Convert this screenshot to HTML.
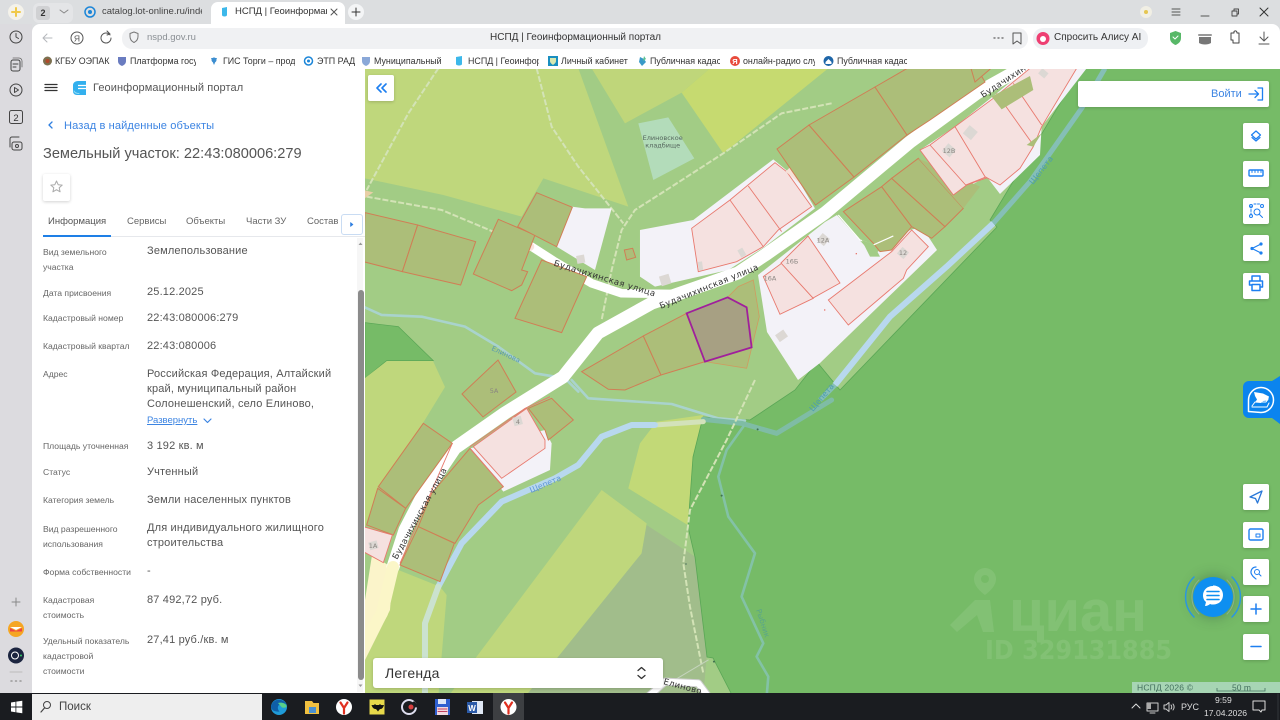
<!DOCTYPE html>
<html><head><meta charset="utf-8"><title>НСПД</title>
<style>
html,body{margin:0;padding:0;width:1280px;height:720px;overflow:hidden;background:#dcdee0;font-family:"Liberation Sans","DejaVu Sans",sans-serif}
svg{position:absolute;left:0;top:0}
polygon,polyline,path,line,circle,rect{vector-effect:non-scaling-stroke}
.t{position:absolute;white-space:nowrap;line-height:14px;height:14px}
.box{position:absolute;background:#fff;border-radius:2px;box-shadow:0 1px 3px rgba(0,0,0,.18)}
.b{font-size:8.9px;color:#333;top:54px}
.l{font-size:8.6px;color:#666;left:43px}
.v{font-size:11px;color:#555;left:147px;letter-spacing:.17px}
.tab{font-size:9.5px;color:#666;top:215px}
.o{fill:#acbe79;stroke:#d07e55;stroke-width:1}
.p{fill:#f5e1e0;stroke:#e8796e;stroke-width:.9}
.w{fill:#f3f2f8}
.g{fill:#dcd8d4}
.dash{fill:none;stroke:#d3e3b6;stroke-width:2;stroke-dasharray:6 2}
.r{fill:none;stroke-linejoin:round;stroke-linecap:round}
</style></head><body>

<!-- MAP -->
<svg width="1280" height="720" viewBox="0 0 1280 720">
<defs><clipPath id="mc"><rect x="365" y="69" width="915" height="624"/></clipPath></defs>
<g clip-path="url(#mc)">
<rect x="365" y="69" width="915" height="624" fill="#a2cc85"/>
<!-- fields top -->
<g transform="translate(365 70) scale(.3333)">
<polygon fill="#bfd77c" points="0,-5 640,-5 790,410 535,325 470,440 235,375 0,325"/>
<polygon fill="#bfd67a" points="680,-5 780,160 950,68 1035,-5"/>
<polygon fill="#c6da70" points="1035,-5 950,68 1075,250 1390,-5"/>
<polygon fill="#b3dcba" points="820,160 910,142 988,265 865,330"/>
<polygon fill="#76bb67" stroke="#5aa656" stroke-width=".7" points="0,758 100,770 205,872 65,872 0,925"/>
</g>
<polygon fill="#bfd77c" points="365,527 365,378 387,361 433,361 445,387 423,423 378,487"/>
<!-- fields bottom -->
<g transform="translate(365 380) scale(.3333)">
<polygon fill="#bfd77c" points="100,570 225,620 245,645 220,950 0,950 0,770"/>
<polygon fill="#bfd77c" points="710,330 845,430 830,520 580,830 490,950 250,950 335,830"/>
<polygon fill="#c2d977" points="875,125 1015,105 985,230 968,435 790,325 825,190"/>
<polygon fill="#a1bd8b" points="845,435 990,530 1025,830 1015,950 480,950 580,830 830,520"/>
</g>
<!-- forest -->
<polygon fill="#76bb67" stroke="#5aa656" stroke-width=".8" points="1083,65 990,220 997,227 840,390 817,362 795,390 750,420 703,417 693,457 688,527 695,557 707,657 713,658 732,695 1285,695 1285,65"/>
<!-- rivers -->
<g transform="translate(365 380) scale(.3333)" class="r">
<polyline stroke="#a9d3cd" stroke-width="2.6" points="620,0 670,55 920,72 1060,115 1140,122"/>
<polyline stroke="#7fbca5" stroke-width="5" points="1400,60 1235,160 1130,130 1015,118"/>
<polyline stroke="#d3e2bb" stroke-width="5" points="1015,125 870,135"/>
<polyline stroke="#b8d8ee" stroke-width="6" points="870,135 800,135 710,170 640,255 570,295 410,365 290,490 220,620"/>
<polyline stroke="#cbe2cf" stroke-width="6" points="220,620 180,730 180,960"/>
<polyline stroke="#83c2a6" stroke-width="2.6" points="1135,140 1085,210 1060,290 1090,410 1170,520 1130,650 1195,790 1175,830 1210,890 1205,950"/>
</g>
<g transform="translate(365 70) scale(.3333)" class="r">
<polyline stroke="#a9d3cd" stroke-width="2.6" points="-5,710 50,735 170,740 300,770 400,830 510,910 600,925 640,965"/>
</g>
<g transform="translate(820 70) scale(.3333)" class="r">
<polyline stroke="#85bfb6" stroke-width="5" stroke-linecap="butt" points="855,-5 785,115 630,335 520,460"/>
<polyline stroke="#b8d8ee" stroke-width="6" stroke-linecap="butt" points="520,460 380,590 210,740 45,945"/>
<polyline stroke="#85bfb6" stroke-width="5" stroke-linecap="butt" points="45,945 0,990"/>
</g>
<!-- paths -->
<g transform="translate(365 70) scale(.3333)">
<polyline class="dash" points="220,-5 130,130 5,360"/>
<polyline class="dash" points="515,-5 560,170 640,290 775,460"/>
<polyline class="dash" points="5,380 230,420 385,485"/>
<polyline class="dash" points="1400,100 1250,130 1075,250 920,350 810,420 770,480 740,600 710,750"/>
</g>
<g transform="translate(365 380) scale(.3333)">
<polyline class="dash" points="1170,0 1085,180 975,390 955,550 975,680 1015,880"/>
</g>
<!-- white zones -->
<g transform="translate(365 70) scale(.3333)">
<polygon class="w" points="575,530 620,410 660,415 740,415 690,600"/>
<polygon class="w" points="825,480 985,450 1225,268 1300,330 1350,415 1200,530 1090,600 870,650 825,620"/>
</g>
<polygon class="w" points="758,275 825,222 837,215 873,255 910,230 922,227 937,250 820,363 798,380 767,332"/>
<g transform="translate(820 70) scale(.3333)">
<polygon class="w" points="300,240 405,170 530,70 620,-5 800,-5 665,170 660,255 540,372 500,320 400,375"/>
</g>
<g transform="translate(365 380) scale(.3333)">
<polygon class="w" points="315,205 540,150 560,190 555,270 415,335"/>
</g>
<polygon fill="#fbf4ca" points="365,600 372,555 393,568 390,610 365,660"/>
<!-- roads -->
<polyline class="r" stroke="#fff" stroke-width="13" points="393,567 405,530 422,497 455,448 505,413 563,377 598,333 652,303 698,287 738,273 765,255 825,213 910,142 977,93 1040,58"/>
<polyline class="r" stroke="#fbf6c8" stroke-width="12" stroke-linecap="butt" points="393,567 382,613 365,643"/>
<g transform="translate(365 70) scale(.3333)" class="r">
<polyline stroke="#fff" stroke-width="8.5" points="400,490 500,530 570,575 680,640 770,670 945,672 1040,640"/>
<polyline stroke="#f8e4dc" stroke-width="8.5" points="405,492 495,530"/>
</g>
<g transform="translate(365 380) scale(.3333)" class="r">
<polyline stroke="#c5d4bd" stroke-width="1" points="1030,840 870,935"/>
<polyline stroke="#cfcfcf" stroke-width="8" points="850,950 900,905 1000,910 1030,950"/>
<polyline stroke="#fff" stroke-width="6" points="850,950 900,905 1000,910 1030,950"/>
</g>
<!-- parcels z3 -->
<g transform="translate(365 70) scale(.3333)">
<polygon class="o" points="0,428 158,465 112,605 -5,575"/>
<polygon class="o" points="158,465 332,515 287,645 112,605"/>
<polygon class="o" points="400,448 510,495 470,600 488,605 470,645 440,662 325,612"/>
<polygon class="o" points="515,368 622,412 575,530 458,470"/>
<polygon class="o" points="530,570 665,620 590,788 450,745"/>
<polygon class="o" points="778,540 803,535 812,562 785,570"/>
<polygon class="o" points="650,905 835,798 888,915 780,960 730,958"/>
<polygon class="o" points="835,798 965,730 1020,875 888,915"/>
<polygon fill="#acbe79" stroke="#cf9b60" stroke-width=".8" points="1088,682 1120,650 1165,630 1183,740 1145,895 1020,875 1160,832 1145,712"/>
<polygon fill="#a7a083" stroke="#a01f9c" stroke-width="1.8" points="965,730 1088,682 1145,712 1160,832 1020,875"/>
<polygon fill="#e8cfa6" points="-5,360 25,367 -5,388"/>
<polygon class="p" points="980,475 1095,390 1230,278 1265,305 1340,410 1240,480 1195,530 1115,575 1000,605"/>
<polyline fill="none" stroke="#e8796e" stroke-width=".9" points="1095,390 1195,530"/>
<polyline fill="none" stroke="#e8796e" stroke-width=".9" points="1150,348 1250,485"/>
<polygon fill="#f5e1d8" points="1262,305 1285,282 1325,330 1310,345"/>
<rect class="g" x="1000" y="575" width="13" height="26" transform="rotate(-8 1006 588)"/>
<rect class="g" x="1122" y="536" width="17" height="25" transform="rotate(-30 1130 548)"/>
<rect class="g" x="885" y="615" width="30" height="30" transform="rotate(-17 900 628)"/>
<rect class="g" x="635" y="556" width="24" height="24" transform="rotate(-10 645 567)"/>
<rect class="g" x="1235" y="785" width="30" height="25" transform="rotate(-35 1250 798)"/>
<polygon class="p" points="1195,620 1250,580 1345,685 1245,733"/>
</g>
<polygon class="p" points="781,263 808,236 840,283 813,298"/>
<g transform="translate(640 0)">
<polygon class="o" points="137,149 169,125 214,177 175.500,205"/>
<polygon class="o" points="169,125 235,87 267,135 214,177"/>
<polygon class="o" points="235,87 273,65 335,65 345,82 290,120 267,135"/>
<polygon class="o" points="330,65 335,82 355,65"/>
</g>
<!-- parcels z5 -->
<g transform="translate(820 70) scale(.3333)">
<polygon class="o" points="70,425 185,350 275,470 215,540 180,545 160,520"/>
<polygon class="o" points="185,350 215,325 375,470 335,505 275,470"/>
<polygon class="o" points="215,325 295,265 430,415 375,470"/>
<polygon fill="#acbe79" points="295,265 480,350 430,415"/>
<polyline fill="none" stroke="#fff" stroke-width="1.2" points="55,435 120,510 160,525 220,498"/>
<polygon fill="#a2cc85" points="160,522 180,560 150,560 125,510"/>
<polygon class="p" points="25,690 215,545 275,480 325,530 260,600 250,625 85,765"/>
<polygon class="p" points="300,240 330,225 405,170 510,320 440,345 400,375"/>
<polyline fill="none" stroke="#e8796e" stroke-width=".9" points="330,225 437,345 500,320"/>
<polygon class="p" points="405,170 520,85 630,-5 770,-5 665,170 640,230 600,295 540,345 495,320"/>
<polyline fill="none" stroke="#e8796e" stroke-width=".9" points="530,70 640,225"/>
<polyline fill="none" stroke="#e8796e" stroke-width=".9" points="580,40 665,165"/>
<polygon fill="#acbe79" points="515,80 630,18 640,60 545,118"/>
<polygon fill="#acbe79" points="640,230 665,190 620,225"/>
<rect class="g" x="435" y="172" width="32" height="32" transform="rotate(40 451 188)"/>
<rect class="g" x="372" y="226" width="30" height="30" transform="rotate(40 387 241)"/>
<rect class="g" x="236" y="536" width="26" height="26" transform="rotate(40 249 549)"/>
<rect class="g" x="658" y="0" width="24" height="20" transform="rotate(40 670 10)"/>
<rect class="g" x="-5" y="495" width="28" height="28" transform="rotate(40 10 510)"/>
<polygon fill="#e8796e" points="107,549 111,549 111,553 107,553"/>
<polygon fill="#e8796e" points="12,718 16,718 16,722 12,722"/>
</g>
<!-- parcels z4 -->
<g transform="translate(365 380) scale(.3333)">
<polygon class="o" points="175,130 262,190 122,385 40,320"/>
<polygon class="o" points="38,325 122,385 85,465 5,435"/>
<polygon class="p" points="-5,440 82,465 55,548 -5,515"/>
<polygon class="o" points="315,205 415,320 340,375 270,490 160,440 200,340"/>
<polygon class="o" points="160,440 268,490 225,605 105,555"/>
<polyline fill="none" stroke="#e8796e" stroke-width=".9" points="262,190 105,550"/>
<polygon class="o" points="490,85 560,55 625,120 550,180 540,150"/>
<polygon class="p" points="325,200 485,85 540,180 540,205 410,295"/>
<polyline fill="none" stroke="#e8796e" stroke-width=".9" points="315,200 480,85 555,50"/>
<polyline fill="none" stroke="#e8796e" stroke-width=".9" points="315,205 415,320"/>
<rect class="g" x="445" y="110" width="26" height="26" transform="rotate(-15 458 123)"/>
<rect class="g" x="375" y="20" width="24" height="22" fill="#e5d5d5" transform="rotate(-15 387 30)"/>
<rect class="g" x="12" y="484" width="26" height="24" transform="rotate(-15 25 495)"/>
<circle cx="1178" cy="148" r="3" fill="#3f6f4f"/>
<circle cx="1070" cy="347" r="3" fill="#3f6f4f"/>
<circle cx="963" cy="552" r="3" fill="#6f8f6f"/>
<circle cx="1047" cy="845" r="3" fill="#3f6f4f"/>
</g>
<polygon class="o" points="462,394 498,360 516,392 483,417"/>
<!-- map labels -->
<g font-family="'DejaVu Sans','Liberation Sans',sans-serif">
<text x="662.700" y="140" font-size="6.500" fill="#55665e" text-anchor="middle">Елиновское</text>
<text x="662.700" y="147.500" font-size="6.500" fill="#55665e" text-anchor="middle">кладбище</text>
<text transform="translate(604 281) rotate(17)" font-size="8.500" fill="#333" text-anchor="middle" letter-spacing=".4">Будачихинская  улица</text>
<text transform="translate(710 289) rotate(-22)" font-size="8.500" fill="#333" text-anchor="middle" letter-spacing=".4">Будачихинская  улица</text>
<text transform="translate(983 98) rotate(-33)" font-size="8.500" fill="#333" letter-spacing=".4">Будачихинская</text>
<text transform="translate(397 560) rotate(-61)" font-size="8.500" fill="#333" letter-spacing=".25">Будачихинская  улица</text>
<text transform="translate(663 684) rotate(15)" font-size="8.500" fill="#333" letter-spacing=".3">Елиново</text>
<text transform="translate(491 350) rotate(25)" font-size="7" fill="#5b9ab0">Елинова</text>
<text transform="translate(531 493) rotate(-23)" font-size="8" fill="#5d94d8">Щепета</text>
<text transform="translate(1033 185) rotate(-52)" font-size="8" fill="#4d9db0">Щепета</text>
<text transform="translate(813 412) rotate(-50)" font-size="8" fill="#4d9db0">Щепета</text>
<text transform="translate(756 610) rotate(72)" font-size="7.500" fill="#5aa58a">Рыбник</text>
<g font-size="6.500" fill="#8a8580" text-anchor="middle">
<text x="949" y="153">12В</text><text x="792" y="263.500">16Б</text><text x="770" y="280.500">16А</text><text x="823" y="242.500">12А</text><text x="903" y="255">12</text><text x="518" y="424">4</text><text x="494" y="393">5А</text><text x="373" y="548">1А</text>
</g>
</g>
<!-- watermark -->
<g fill="#fff" opacity=".085">
<path d="M985 568a11 11 0 0 1 11 11c0 7-7 13-11 16c-4-3-11-9-11-16a11 11 0 0 1 11-11zm0 7a4 4 0 1 0 0 8a4 4 0 0 0 0-8z" fill-rule="evenodd"/>
<polygon points="950,625 975,600 990,600 994,632 983,632 977,615 957,632"/>
<text x="1009" y="631" font-size="58" font-weight="bold" textLength="138" lengthAdjust="spacingAndGlyphs">циан</text>
<text x="985" y="659" font-size="26" font-weight="bold" textLength="187" lengthAdjust="spacingAndGlyphs" font-family="'DejaVu Sans',sans-serif">ID 329131885</text>
</g>
<!-- attribution -->
<rect x="1132" y="682" width="148" height="11" fill="#a7d5b4"/>
<text x="1137" y="690.500" font-size="8.500" fill="#44705e" letter-spacing=".2">НСПД 2026 ©</text>
<text x="1232" y="690.500" font-size="8.500" fill="#44705e">50 m</text>
<polyline fill="none" stroke="#44705e" stroke-width=".8" points="1217,688 1217,691 1265,691 1265,688"/>
</g>
</svg>

<!-- browser chrome -->
<div style="position:absolute;left:0;top:0;width:1280px;height:24px;background:#dcdee0"></div>
<div style="position:absolute;left:0;top:24px;width:32px;height:669px;background:#dcdbdf"></div>
<div style="position:absolute;left:32px;top:24px;width:1248px;height:45px;background:#fff;border-radius:8px 8px 0 0"></div>
<div style="position:absolute;left:33px;top:3px;width:40px;height:20px;background:#e4e5e7;border-radius:6px"></div>
<div style="position:absolute;left:36px;top:6px;width:14px;height:14px;background:#d0d1d3;border-radius:3px;font-size:9px;text-align:center;line-height:14px;color:#333;font-weight:bold">2</div>
<div style="position:absolute;left:211px;top:2px;width:134px;height:22px;background:#fff;border-radius:7px 7px 0 0"></div>
<div class="t" style="left:102px;top:5px;font-size:9.5px;color:#444;width:100px;overflow:hidden">catalog.lot-online.ru/index</div>
<div class="t" style="left:235px;top:5px;font-size:9.5px;color:#333;width:92px;overflow:hidden">НСПД | Геоинформаци</div>
<div style="position:absolute;left:122px;top:28px;width:906px;height:21px;background:#f0f1f3;border-radius:10px"></div>
<div class="t" style="left:147px;top:31px;font-size:9.5px;color:#8a8f94">nspd.gov.ru</div>
<div class="t" style="left:490px;top:31px;font-size:10px;color:#333">НСПД | Геоинформационный портал</div>
<div style="position:absolute;left:1033px;top:28px;width:115px;height:21px;background:#eef0f3;border-radius:10px"></div>
<div class="t" style="left:1054px;top:31px;font-size:10px;color:#333">Спросить Алису AI</div>

<div class="t b" style="left:55px">КГБУ ОЭПАК</div>
<div class="t b" style="left:130px;width:66px;overflow:hidden">Платформа госуд</div>
<div class="t b" style="left:223px;width:72px;overflow:hidden">ГИС Торги – прод</div>
<div class="t b" style="left:317px">ЭТП РАД</div>
<div class="t b" style="left:374px;width:68px;overflow:hidden">Муниципальный</div>
<div class="t b" style="left:468px;width:71px;overflow:hidden">НСПД | Геоинфор</div>
<div class="t b" style="left:561px">Личный кабинет</div>
<div class="t b" style="left:650px;width:70px;overflow:hidden">Публичная кадас</div>
<div class="t b" style="left:743px;width:72px;overflow:hidden">онлайн-радио слу</div>
<div class="t b" style="left:837px;width:70px;overflow:hidden">Публичная кадас</div>

<!-- left panel -->
<div style="position:absolute;left:32px;top:69px;width:333px;height:624px;background:#fff"></div>
<div class="t" style="left:93px;top:81px;font-size:11px;color:#555;letter-spacing:.1px">Геоинформационный портал</div>
<div class="t" style="left:64px;top:119px;font-size:11.1px;color:#3c84e2;letter-spacing:.1px">Назад в найденные объекты</div>
<div class="t" style="left:43px;top:147px;font-size:14.6px;color:#555">Земельный участок: 22:43:080006:279</div>
<div class="box" style="left:43px;top:174px;width:27px;height:27px"></div>
<div class="t tab" style="left:48px;color:#555">Информация</div>
<div class="t tab" style="left:127px">Сервисы</div>
<div class="t tab" style="left:186px">Объекты</div>
<div class="t tab" style="left:246px">Части ЗУ</div>
<div class="t tab" style="left:307px">Состав</div>
<div style="position:absolute;left:43px;top:236px;width:322px;height:1px;background:#e6e8ec"></div>
<div style="position:absolute;left:43px;top:235px;width:68px;height:2px;background:#1e7fe6"></div>
<div style="position:absolute;left:341px;top:214px;width:20px;height:19px;background:#fff;border:1px solid #c9dcf3;border-radius:3px"></div>
<div style="position:absolute;left:357px;top:238px;width:6px;height:454px;background:#f6f6f6"></div>
<div style="position:absolute;left:357.500px;top:290px;width:6px;height:390px;background:#8b8b8b;border-radius:3px"></div>

<div class="t l" style="top:245px">Вид земельного</div>
<div class="t l" style="top:260px">участка</div>
<div class="t l" style="top:285.500px">Дата присвоения</div>
<div class="t l" style="top:311px">Кадастровый номер</div>
<div class="t l" style="top:339px">Кадастровый квартал</div>
<div class="t l" style="top:367px">Адрес</div>
<div class="t l" style="top:439px">Площадь уточненная</div>
<div class="t l" style="top:465px">Статус</div>
<div class="t l" style="top:493px">Категория земель</div>
<div class="t l" style="top:522px">Вид разрешенного</div>
<div class="t l" style="top:537px">использования</div>
<div class="t l" style="top:565px">Форма собственности</div>
<div class="t l" style="top:593px">Кадастровая</div>
<div class="t l" style="top:608px">стоимость</div>
<div class="t l" style="top:634px">Удельный показатель</div>
<div class="t l" style="top:649px">кадастровой</div>
<div class="t l" style="top:664px">стоимости</div>

<div class="t v" style="top:244px">Землепользование</div>
<div class="t v" style="top:284.500px">25.12.2025</div>
<div class="t v" style="top:310.500px">22:43:080006:279</div>
<div class="t v" style="top:338.500px">22:43:080006</div>
<div class="t v" style="top:366.500px">Российская Федерация, Алтайский</div>
<div class="t v" style="top:382px">край, муниципальный район</div>
<div class="t v" style="top:397px">Солонешенский, село Елиново,</div>
<div class="t" style="left:147px;top:414px;font-size:9.5px;color:#3c84e2;text-decoration:underline">Развернуть</div>
<div class="t v" style="top:438.500px">3 192 кв. м</div>
<div class="t v" style="top:464.500px">Учтенный</div>
<div class="t v" style="top:492.500px">Земли населенных пунктов</div>
<div class="t v" style="top:521px">Для индивидуального жилищного</div>
<div class="t v" style="top:536px">строительства</div>
<div class="t v" style="top:564px">-</div>
<div class="t v" style="top:592.500px">87 492,72 руб.</div>
<div class="t v" style="top:633px">27,41 руб./кв. м</div>

<!-- map overlays -->
<div class="box" style="left:368px;top:75px;width:26px;height:26px"></div>
<div class="box" style="left:1078px;top:81px;width:191px;height:26px"></div>
<div class="t" style="left:1211px;top:87px;font-size:11px;color:#3c84e2">Войти</div>
<div class="box" style="left:373px;top:658px;width:290px;height:30px;border-radius:3px"></div>
<div class="t" style="left:385px;top:666px;font-size:14px;color:#333;letter-spacing:.2px">Легенда</div>
<div class="box" style="left:1243px;top:123px;width:26px;height:26px"></div>
<div class="box" style="left:1243px;top:161px;width:26px;height:26px"></div>
<div class="box" style="left:1243px;top:198px;width:26px;height:26px"></div>
<div class="box" style="left:1243px;top:235px;width:26px;height:26px"></div>
<div class="box" style="left:1243px;top:273px;width:26px;height:26px"></div>
<div class="box" style="left:1243px;top:484px;width:26px;height:26px"></div>
<div class="box" style="left:1243px;top:522px;width:26px;height:26px"></div>
<div class="box" style="left:1243px;top:559px;width:26px;height:26px"></div>
<div class="box" style="left:1243px;top:596px;width:26px;height:26px"></div>
<div class="box" style="left:1243px;top:634px;width:26px;height:26px"></div>
<div style="position:absolute;left:1243px;top:381px;width:37px;height:37px;background:#0b84ee;border-radius:6px 0 0 6px"></div>
<div style="position:absolute;left:1193px;top:577px;width:40px;height:40px;background:#0e8ff0;border-radius:50%;box-shadow:0 0 14px rgba(40,70,60,.45)"></div>

<!-- taskbar -->
<div style="position:absolute;left:0;top:693px;width:1280px;height:27px;background:#1a1c20"></div>
<div style="position:absolute;left:32px;top:694px;width:230px;height:26px;background:#eeeeee"></div>
<div class="t" style="left:59px;top:700px;font-size:11.5px;color:#444">Поиск</div>
<div style="position:absolute;left:493px;top:693px;width:31px;height:27px;background:#3d3f42"></div>
<div class="t" style="left:1181px;top:700px;font-size:9px;color:#ddd">РУС</div>
<div class="t" style="left:1215px;top:693px;font-size:8.6px;color:#ddd">9:59</div>
<div class="t" style="left:1204px;top:706px;font-size:8.6px;color:#ddd">17.04.2026</div>

<!-- icons overlay -->
<svg width="1280" height="720" viewBox="0 0 1280 720" fill="none" stroke-linecap="round" stroke-linejoin="round">
<!-- tab bar -->
<circle cx="16" cy="12" r="8" fill="#f4f2ea"/><path d="M16 8v8M12 12h8" stroke="#f0c94a" stroke-width="2"/>
<path d="M60 10l4 3 4-3" stroke="#888"/>
<circle cx="90" cy="12" r="5" stroke="#1c86d8" stroke-width="1.5"/><circle cx="90" cy="12" r="2" fill="#1c86d8"/>
<path d="M222 8l5-1v8c0 2-5 2-5 0z" fill="#3db8ea"/>
<path d="M331 9l6 6M337 9l-6 6" stroke="#555"/>
<circle cx="356" cy="12" r="8" fill="#f4f5f6"/><path d="M356 8v8M352 12h8" stroke="#333"/>
<circle cx="1146" cy="12" r="6" fill="#f1efe4"/><circle cx="1146" cy="12" r="2" fill="#e5c650"/>
<path d="M1172 9h8M1172 12h8M1172 15h8" stroke="#555"/>
<path d="M1201 16h8" stroke="#555"/>
<path d="M1232 11h5v5h-5zM1234 11v-2h4.500v5H1237" stroke="#444" stroke-width=".9"/>
<path d="M1260 8l8 8M1268 8l-8 8" stroke="#333"/>
<!-- toolbar -->
<path d="M43 38h9M43 38l4-4M43 38l4 4" stroke="#b5b8bc"/>
<circle cx="77" cy="38" r="6" stroke="#555"/><text x="77" y="41.500" font-size="8.500" fill="#555" text-anchor="middle" font-family="Liberation Sans">Я</text>
<path d="M110 35a5 5 0 1 0 1 3M107 31l3 3-3 1" stroke="#555"/>
<path d="M130 33.500l4-1.500 4 1.500v3c0 3-2 5-4 6-2-1-4-3-4-6z" stroke="#777"/>
<path d="M994 38h1M998 38h1M1002 38h1" stroke="#777" stroke-width="1.4"/>
<path d="M1013 33h8v11l-4-3-4 3z" stroke="#555"/>
<circle cx="1043" cy="38.500" r="6.500" fill="#ee3f72"/><circle cx="1043" cy="39" r="3" fill="#fff"/>
<path d="M1170 33l5.500-2 5.500 2v5c0 4-3 6-5.500 7-2.500-1-5.500-3-5.500-7z" fill="#58b868"/><path d="M1173 37l2 2 3-3" stroke="#fff"/>
<path d="M1199 37h12v6c-3 2-9 2-12 0z" fill="#777"/><path d="M1199 35h12" stroke="#999" stroke-width="2"/>
<path d="M1231 33h3v-1.500c2-1.500 3 0 3 1.500h2v10h-6v-3h-2z" stroke="#444"/>
<path d="M1264 32v8M1260 37l4 4 4-4M1259 44h10" stroke="#555"/>
<!-- bookmarks -->
<circle cx="47.500" cy="61" r="4.500" fill="#7c7050"/><circle cx="47.500" cy="61" r="2" fill="#b04a2a"/>
<path d="M118 57h8v4c0 3-2 4-4 5-2-1-4-2-4-5z" fill="#6a7cc0"/>
<path d="M211 58h6l-3 7z" fill="#3d8ed0"/><circle cx="214" cy="60" r="2.500" fill="#3d8ed0"/>
<circle cx="308.500" cy="61" r="4" stroke="#1c86d8" stroke-width="1.500"/><circle cx="308.500" cy="61" r="1.500" fill="#1c86d8"/>
<path d="M362 57h8v4c0 3-2 4-4 5-2-1-4-2-4-5z" fill="#8aa8d8"/>
<path d="M456 57l6-1v8c0 2-6 2-6 0z" fill="#3db8ea"/>
<rect x="548" y="56" width="10" height="10" fill="#1a8fc0"/><path d="M550 58h6v3c0 2-2 3-3 4-1-1-3-2-3-4z" fill="#d8e8b0"/>
<path d="M640 57l4 2 2 3-4 4-3-4z" fill="#3a9ac8"/><path d="M644 56l2 3-3 2z" fill="#58c090"/>
<circle cx="735" cy="61" r="5" fill="#e84b3c"/><text x="735" y="64" font-size="7.500" fill="#fff" text-anchor="middle" font-family="Liberation Sans" font-weight="bold">Я</text>
<circle cx="828.500" cy="61" r="5" fill="#1e66a8"/><path d="M825.500 62l3-3 3 3v2h-6z" fill="#fff"/>
<!-- sidebar -->
<circle cx="16" cy="37" r="6" stroke="#444"/><path d="M16 33.500V37l2.500 1.500" stroke="#444"/>
<path d="M11 62a2 2 0 0 1 2-2h5a2 2 0 0 1 2 2v7a2 2 0 0 1-2 2h-5a2 2 0 0 1-2-2zM13 64h5M13 67h3" stroke="#444"/><path d="M13 58h6a3 3 0 0 1 3 3v6" stroke="#666" stroke-width=".8"/>
<circle cx="16" cy="90" r="6" stroke="#444"/><path d="M14.500 87.500l4 2.500-4 2.500z" stroke="#444"/>
<rect x="9.500" y="110.500" width="13" height="13" rx="2" stroke="#444"/><text x="16" y="121" font-size="9.500" fill="#333" text-anchor="middle" font-family="Liberation Sans">2</text>
<path d="M10 147v-8a2 2 0 0 1 2-2h7" stroke="#444"/><rect x="12" y="142" width="10" height="8" rx="2" stroke="#444"/><circle cx="17" cy="146" r="1.500" stroke="#444"/>
<path d="M16 598v8M12 602h8" stroke="#888"/>
<circle cx="16" cy="629" r="8" fill="#f5a623"/><path d="M10 627h12l-6 3z" fill="#fff"/><path d="M10 628l6 3 6-3v3.500H10z" fill="#e44"/>
<circle cx="16" cy="655.500" r="8" fill="#1c2540"/><circle cx="15" cy="655.500" r="3.500" stroke="#fff"/><circle cx="21" cy="655.500" r="1" fill="#3c6"/>
<path d="M10 672h12" stroke="#bbb"/>
<path d="M11 681h1M15.500 681h1M20 681h1" stroke="#999" stroke-width="1.500"/>
<!-- panel -->
<path d="M45 84.500h12M45 87.500h12M45 90.500h12" stroke="#333" stroke-width="1.300"/>
<path d="M78 81h8v14h-9c-3 0-4-2-4-4v-6c0-2 2-4 5-4z" fill="#33b0ee"/><path d="M78 85.500h8M78 88.500h8" stroke="#fff" stroke-width="1.200" stroke-linecap="butt"/><path d="M74 91c1 2 3 2.500 5 2.500" stroke="#8fdcf6"/>
<path d="M52 122l-3 3 3 3" stroke="#2f7fe0" stroke-width="1.300"/>
<path d="M56.500 181l1.700 3.700 4 .4-3 2.700.9 4-3.600-2.100-3.600 2.100.9-4-3-2.700 4-.4z" stroke="#aaa"/>
<path d="M350.500 222.500v4l2.500-2z" fill="#2f7fe0" stroke="#2f7fe0" stroke-width=".6"/>
<path d="M358.500 245l2-2.500 2 2.500z" fill="#999"/><path d="M358.500 684.500l2 2.500 2-2.500z" fill="#999"/>
<path d="M204 419l3.500 3.500 3.500-3.500" stroke="#3c84e2" stroke-width="1.200"/>
<!-- map btns -->
<path d="M381 84l-4 4 4 4M386 84l-4 4 4 4" stroke="#1d7ff0" stroke-width="1.600"/>
<path d="M1249 94h9M1255 90.500l3.500 3.500-3.500 3.500" stroke="#1d7ff0" stroke-width="1.300"/><path d="M1258 88h4.500v12h-4.500" stroke="#1d7ff0" stroke-width="1.300"/>
<path d="M638 670.500l3.500-3 3.500 3M638 675.500l3.500 3 3.500-3" stroke="#333" stroke-width="1.300"/>
<path d="M1256 131l4.500 4-4.500 4-4.500-4z" stroke="#1d7ff0" stroke-width="1.200"/><path d="M1252 137.500l4 3.500 4-3.500" stroke="#1d7ff0" stroke-width="1.200"/>
<rect x="1249" y="170" width="14" height="6" rx="1" stroke="#1d7ff0" stroke-width="1.400"/><path d="M1252 170v2.500M1255 170v2.500M1258 170v2.500M1261 170v2.500" stroke="#1d7ff0"/>
<path d="M1251 206v10M1254 204h7" stroke="#1d7ff0" stroke-dasharray="2 1.500"/><circle cx="1251" cy="206" r="1.500" stroke="#1d7ff0"/><circle cx="1262" cy="206" r="1.500" stroke="#1d7ff0"/><circle cx="1251" cy="216" r="1.500" stroke="#1d7ff0"/><circle cx="1257" cy="212" r="3" stroke="#1d7ff0"/><path d="M1259.500 214.500l3 3" stroke="#1d7ff0"/>
<path d="M1261 244l-9 4.500 9 4.500" stroke="#1d7ff0" stroke-width="1.200"/><circle cx="1261" cy="244" r="1.600" fill="#1d7ff0"/><circle cx="1252" cy="248.500" r="1.600" fill="#1d7ff0"/><circle cx="1261" cy="253" r="1.600" fill="#1d7ff0"/>
<path d="M1252 285h-2.500v-4h13v6h-2.500M1252 281v-5h8v5M1252 284.500h8v6h-8z" stroke="#1d7ff0" stroke-width="1.500"/>
<path d="M1250 497l12-6-4.500 12-2-4.500z" stroke="#2a78d8" stroke-width="1.300"/>
<rect x="1249" y="529" width="14" height="11" rx="1.500" stroke="#1d7ff0" stroke-width="1.400"/><rect x="1256" y="534" width="4" height="3" stroke="#1d7ff0"/>
<path d="M1256 567a5 5 0 0 0-4 8c1 2 3 3 4 4" stroke="#1d7ff0" stroke-width="1.200"/><circle cx="1257" cy="572" r="2.500" stroke="#1d7ff0"/><path d="M1259 574l2 2" stroke="#1d7ff0"/>
<path d="M1256 604v10M1251 609h10" stroke="#1d7ff0" stroke-width="1.500"/>
<path d="M1251 646.500h10" stroke="#1d7ff0" stroke-width="1.500"/>
<!-- bookmark badge -->
<path d="M1248.500 411.500v-11.500a12.500 12.500 0 1 1 12.500 12.500z" stroke="#fff" stroke-width="1.500"/>
<path d="M1254 392l9 1.500 6 3-1 4-5 .5-2 2-6-.5 2-3-2-3.500z" fill="#fff"/>
<path d="M1252 406l3-4h11l2-3M1252 407h15l2-4" stroke="#fff"/>
<path d="M1272 381l8-5v5z" fill="#0b84ee"/><path d="M1272 418l8 6v-6z" fill="#0b84ee"/>
<!-- chat -->
<path d="M1213 586c-6 0-10 4-10 9.500 0 2.500 1 5 3 6.500l-1 4c2 0 4-1 5-2 1 .5 2 .5 3 .5 6 0 10-4 10-9.500s-4-9.500-10-9.500z" fill="#fff"/>
<path d="M1207 591.500h12M1207 595.500h12M1207 599.500h12" stroke="#0e8ff0" stroke-width="1.500"/>
<path d="M1194 577a28 28 0 0 0 0 40" stroke="#2a96e0" stroke-width="1.500"/><path d="M1232 577a28 28 0 0 1 0 40" stroke="#2a96e0" stroke-width="1.500"/>
<path d="M1199 580a24 24 0 0 0 0 34M1227 580a24 24 0 0 1 0 34" stroke="#9ab8a0" stroke-width="1" opacity=".7"/>
<!-- taskbar -->
<path d="M11 702.500l4.500-.7v4.700H11zM16.300 701.600l6-.9v5.800h-6zM11 707.500h4.500v4.700l-4.500-.7zM16.300 707.500h6v5.800l-6-.9z" fill="#fff"/>
<circle cx="47" cy="705" r="3.500" stroke="#444"/><path d="M44.500 708l-3.500 4" stroke="#444" stroke-width="1.200"/>
<circle cx="279" cy="707" r="8" fill="#1f9bd8"/><path d="M271 707a8 8 0 0 1 15.500-2c-2-2-6-2-8 .5-1 1.500-1 4 1 6-4 .5-8-1-8.500-4.500z" fill="#0f5ea8"/><path d="M278 703c3-1 8 0 8.500 3 .2 1.500-2 2-4.500 1.500z" fill="#58d088"/>
<path d="M305 701h7l1.500 2h5.500v11h-14z" fill="#f0c040"/><rect x="309" y="707" width="7" height="6" fill="#4a90d0"/>
<circle cx="344" cy="707" r="8" fill="#fff"/><path d="M340.500 702.500l3.500 5.500 3.500-5.500M344 708v5.500" stroke="#e03020" stroke-width="2.200"/>
<rect x="369.500" y="699.500" width="15" height="15" fill="#e6d84a"/><path d="M371 705c2 0 3 .5 4-1l1 1h3l1-1c1 1.500 2 1 4 1-1 3-2 4-3.500 4-1 0-2 2-2.500 2.500-.5-.5-1.500-2.500-2.500-2.500-1.500 0-3-1-4-4z" fill="#111"/>
<circle cx="409" cy="707" r="7" stroke="#dde" stroke-width="2"/><circle cx="411" cy="707" r="2.500" fill="#d94040"/><path d="M414 703l2 3" stroke="#1a1c20" stroke-width="3"/>
<rect x="435" y="699" width="15" height="16" fill="#2f5fd0"/><rect x="438" y="699" width="8" height="5" fill="#dde6f8"/><rect x="437" y="707" width="11" height="8" fill="#f0d8e0"/><path d="M438 709h9M438 711.500h9" stroke="#c04060"/>
<rect x="472" y="701" width="11" height="13" fill="#e0e8f5"/><rect x="467" y="702" width="10" height="11" fill="#2b5aa8"/><text x="472" y="711" font-size="8" fill="#fff" text-anchor="middle" font-family="Liberation Sans" font-weight="bold">W</text>
<circle cx="508.500" cy="707" r="8" fill="#fff"/><path d="M505 702.500l3.500 5.500 3.500-5.500M508.500 708v5.500" stroke="#e03020" stroke-width="2.200"/>
<path d="M1132 708l4-4 4 4" stroke="#ddd"/>
<rect x="1147" y="703" width="11" height="8" stroke="#ccc"/><rect x="1147" y="703" width="4" height="6" fill="#aaa"/><path d="M1150 713h5" stroke="#ccc"/>
<path d="M1164 705h2l3-2.500v9l-3-2.500h-2z" stroke="#ccc"/><path d="M1171 705c1 1 1 3 0 4M1173 704c1.500 2 1.500 4 0 6" stroke="#ccc"/>
<path d="M1253 701h12v9h-3l-1 2-2-2h-6z" stroke="#ddd"/>
<line x1="1278" y1="694" x2="1278" y2="720" stroke="#33363a"/>
</svg>
</body></html>
